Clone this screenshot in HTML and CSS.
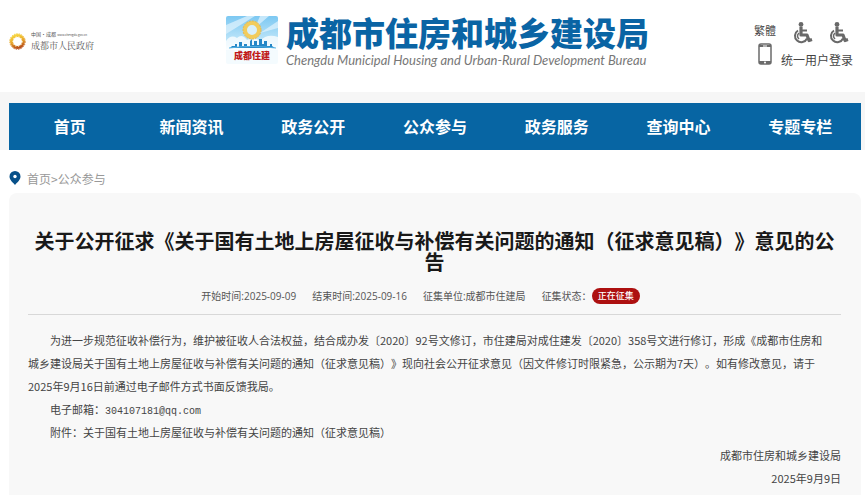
FILE: index.html
```
<!DOCTYPE html>
<html lang="zh-CN">
<head>
<meta charset="utf-8">
<meta name="viewport" content="width=device-width, initial-scale=1">
<title>成都市住房和城乡建设局</title>
<link rel="stylesheet" href="styles.css">
</head>
<body>
<header class="header">
  <a class="gov" href="#">
    <svg class="gov-ring" viewBox="0 0 34 34" aria-hidden="true">
      <defs><linearGradient id="gold" x1="0.3" y1="0" x2="0.6" y2="1"><stop offset="0" stop-color="#f6d33c"/><stop offset="0.5" stop-color="#e8a52c"/><stop offset="1" stop-color="#b8501c"/></linearGradient></defs>
      <circle cx="17" cy="17" r="12" fill="none" stroke="url(#gold)" stroke-width="6"/>
      <circle cx="17" cy="17" r="15.500" fill="none" stroke="url(#gold)" stroke-width="2" stroke-dasharray="3 2"/>
      <circle cx="17" cy="17" r="10" fill="none" stroke="#fff3c4" stroke-width="2" stroke-dasharray="2 4"/>
    </svg>
    <span class="gov-text">
      <span class="gov-top">中国·成都 <span class="gov-url">www.chengdu.gov.cn</span></span>
      <span class="gov-name">成都市人民政府</span>
    </span>
  </a>
  <div class="brand">
    <svg class="brand-logo" viewBox="0 0 52 48" role="img" aria-label="成都住建">
      <defs>
        <linearGradient id="sky" x1="0" y1="0" x2="0" y2="1"><stop offset="0" stop-color="#7cc8f2"/><stop offset="0.6" stop-color="#c9eafa"/><stop offset="0.72" stop-color="#f4fbfe"/></linearGradient>
      </defs>
      <rect width="52" height="48" rx="2" fill="url(#sky)"/>
      <path d="M0 9L21 0H29L0 18ZM34 0H43L29 12ZM52 5V12L34 17Z" fill="#e2f4fd" opacity="0.7"/>
      <path d="M0 25Q5 18 11 22Q16 17 21 24Q29 20 34 25Q41 17 52 21V34H0Z" fill="#fff" opacity="0.75"/>
      <circle cx="26" cy="14" r="7" fill="#d8f0fc" stroke="#f2cc5c" stroke-width="4"/>
      <circle cx="26" cy="14" r="9" fill="none" stroke="#e8b94c" stroke-width="1" stroke-dasharray="2 1"/>
      <path d="M4 32L6 30H9V28H11V31H13V26H16V30H18V28H21V30H24V25L26 23V29H28V25H31V29H33V23H36V28H38V25H41V30H44V28H46V30L49 32Z" fill="#2587c7"/>
      <path d="M3 32Q25 29 50 32" fill="none" stroke="#55b2e3" stroke-width="1"/>
      <text class="brand-logo-text" x="26" y="43" text-anchor="middle">成都住建</text>
    </svg>
    <div class="brand-text">
      <h1 class="brand-name">成都市住房和城乡建设局</h1>
      <p class="brand-en">Chengdu Municipal Housing and Urban-Rural Development Bureau</p>
    </div>
  </div>
  <div class="tools">
    <div class="tools-left">
      <a href="#">繁體</a>
      <a href="#" aria-label="手机版"><svg class="phone" viewBox="0 0 14 22" aria-hidden="true"><rect x="1" y="1" width="12" height="20" rx="2" fill="#fff" stroke="#6b6b6b" stroke-width="1.500"/><path d="M1 2H13V4H1ZM1 18H13V21H1Z" fill="#6b6b6b"/><path d="M5 3H9" stroke="#fff" stroke-width="1"/><circle cx="7" cy="19.500" r="1" fill="#fff"/></svg></a>
    </div>
    <div class="tools-right">
      <div class="access">
        <a href="#" aria-label="无障碍"><svg class="chair" viewBox="0 0 20 22" aria-hidden="true"><use href="#chair"/></svg></a>
        <a href="#" aria-label="关怀版"><svg class="chair" viewBox="0 0 20 22" aria-hidden="true"><g id="chair" fill="none" stroke="#696969"><circle cx="8" cy="2.500" r="2.400" fill="#696969" stroke="none"/><path d="M8 5V13H14L16 18.500L19 17.500" stroke-width="3.200" stroke-linejoin="round"/><path d="M8 8.500H14" stroke-width="2"/><path d="M5 8.500A6.300 6.300 0 1 0 14 16.500" stroke-width="2"/><path d="M6 11Q3 14 6 17" stroke-width="1.500"/></g></svg></a>
      </div>
      <a class="login" href="#">统一用户登录</a>
    </div>
  </div>
</header>
<div class="nav-band">
  <nav class="nav">
    <a href="#">首页</a>
    <a href="#">新闻资讯</a>
    <a href="#">政务公开</a>
    <a href="#">公众参与</a>
    <a href="#">政务服务</a>
    <a href="#">查询中心</a>
    <a href="#">专题专栏</a>
  </nav>
</div>
<div class="crumbs">
  <svg class="pin" viewBox="0 0 12 14" aria-hidden="true"><path d="M6 0A5.500 5.500 0 0 1 11.500 5.500C11.500 9 8 11.500 6 14C4 11.500 0.500 9 0.500 5.500A5.500 5.500 0 0 1 6 0Z" fill="#075089"/><circle cx="6" cy="5.500" r="1.700" fill="#fff"/></svg>
  <div><a href="#">首页</a>&gt;<a href="#">公众参与</a></div>
</div>
<main class="panel">
  <h2 class="title">关于公开征求《关于国有土地上房屋征收与补偿有关问题的通知（征求意见稿）》意见的公告</h2>
  <div class="meta">
    <span>开始时间:2025-09-09</span>
    <span>结束时间:2025-09-16</span>
    <span>征集单位:成都市住建局</span>
    <span class="state">征集状态：<strong class="badge">正在征集</strong></span>
  </div>
  <article class="article">
    <p>为进一步规范征收补偿行为，维护被征收人合法权益，结合成办发〔2020〕92号文修订，市住建局对成住建发〔2020〕358号文进行修订，形成《成都市住房和<br>城乡建设局关于国有土地上房屋征收与补偿有关问题的通知（征求意见稿）》现向社会公开征求意见（因文件修订时限紧急，公示期为7天）。如有修改意见，请于<br>2025年9月16日前通过电子邮件方式书面反馈我局。</p>
    <p>电子邮箱：<span class="mail">304107181@qq.com</span></p>
    <p>附件：关于国有土地上房屋征收与补偿有关问题的通知（征求意见稿）</p>
    <p class="sign">成都市住房和城乡建设局</p>
    <p class="sign">2025年9月9日</p>
  </article>
</main>
</body>
</html>
```

FILE: styles.css
```
* { box-sizing: border-box; }
body {
  margin: 0;
  background: #fff;
  color: #444;
  font-family: "Noto Sans CJK SC", sans-serif;
  font-size: 11px;
  text-spacing-trim: space-all;
}
h1, h2, p { margin: 0; }
a { color: inherit; text-decoration: none; }
svg { display: block; }

.header {
  display: grid;
  grid-template-columns: 217px auto 1fr;
  align-items: start;
  height: 92px;
  padding: 16px 12px 0 9px;
}
.gov { display: flex; align-items: center; gap: 5px; padding-top: 14px; }
.gov-ring { width: 17px; height: 17px; }
.gov-text { display: flex; flex-direction: column; color: #555; }
.gov-top { font-size: 5px; line-height: 8px; }
.gov-url { font-size: 3px; }
.gov-name { font-family: "Noto Serif CJK SC", "Noto Sans CJK SC", serif; font-size: 9px; line-height: 13px; }

.brand { display: flex; gap: 8px; }
.brand-logo { width: 52px; height: 48px; }
.brand-logo-text { font-size: 9px; font-weight: 900; fill: #c01818; }
.brand-name { color: #0a64a4; font-size: 33px; font-weight: 900; line-height: 32px; }
.brand-en {
  padding-top: 4px;
  color: #777;
  font-family: Lato, sans-serif;
  font-size: 13px;
  font-style: italic;
  line-height: 16px;
}

.tools { display: flex; justify-content: flex-end; gap: 5px; padding-top: 6px; }
.tools-left { display: flex; flex-direction: column; align-items: center; gap: 5px; line-height: 16px; }
.phone { width: 14px; height: 22px; }
.access { display: flex; justify-content: space-between; padding: 0 4px 0 12px; }
.chair { width: 20px; height: 22px; }
.login { display: block; padding-top: 7px; font-size: 12px; line-height: 18px; }

.nav-band { background: #f6f6f6; padding: 11px 4px 0 9px; }
.nav { display: flex; background: #0765a3; }
.nav a {
  flex: 1;
  color: #fff;
  font-size: 16px;
  font-weight: 700;
  line-height: 47px;
  text-align: center;
}

.crumbs {
  display: flex;
  align-items: flex-start;
  gap: 6px;
  height: 43px;
  padding: 21px 9px 0;
  color: #999;
  font-size: 12px;
  line-height: 16px;
}
.pin { width: 12px; height: 14px; }

.panel {
  min-height: 302px;
  margin: 0 4px 0 9px;
  padding: 37px 20px 7px 19px;
  border-radius: 8px 8px 0 0;
  background: #f8f8f8;
}
.title { color: #191919; font-size: 20px; font-weight: 700; line-height: 21px; text-align: center; }
.meta {
  display: flex;
  justify-content: center;
  align-items: center;
  gap: 16px;
  height: 43px;
  padding: 5px 28px 0 0;
  border-bottom: 1px solid #d8d8d8;
  color: #555;
  font-family: "Open Sans", "Noto Sans CJK SC", sans-serif;
  font-size: 10px;
}
.state { display: flex; align-items: center; }
.badge {
  padding: 0 6px;
  border-radius: 8px;
  background: #ad1010;
  color: #fff;
  font-size: 9px;
  font-weight: 500;
  line-height: 16px;
}
.article { padding-top: 14px; line-height: 23px; white-space: nowrap; }
.article p { text-indent: 2em; }
.mail { font-family: "Liberation Mono", monospace; font-size: 10px; line-height: 1; }
.article .sign { text-align: right; text-indent: 0; }
```
